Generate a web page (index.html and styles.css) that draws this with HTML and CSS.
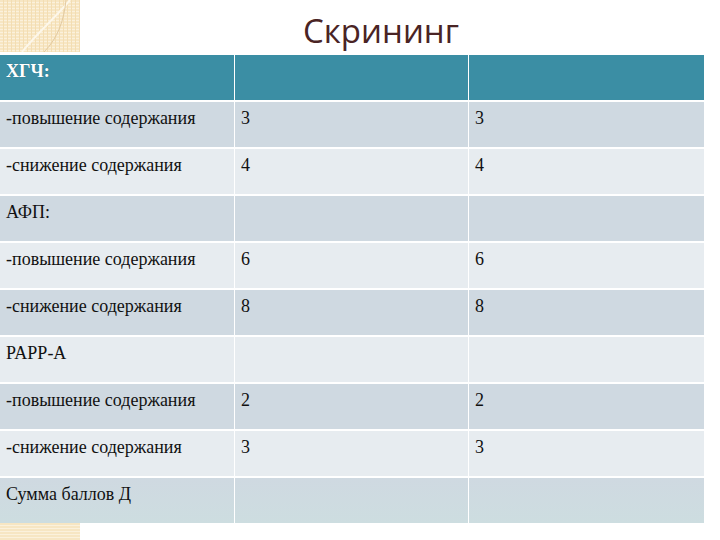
FILE: index.html
```html
<!DOCTYPE html>
<html lang="ru">
<head>
<meta charset="utf-8">
<title>Скрининг</title>
<link rel="stylesheet" href="styles.css">
</head>
<body>
<div class="slide">
  <div class="top">
    <svg class="deco" width="80" height="52" viewBox="0 0 80 52">
      <defs>
        <pattern id="stripes" width="4" height="3" patternUnits="userSpaceOnUse">
          <rect width="4" height="3" fill="#f7e6c3"/>
          <rect y="2" width="4" height="1" fill="#fbf1dc"/>
          <rect x="3" width="1" height="3" fill="#f3ddb2"/>
        </pattern>
      </defs>
      <rect width="80" height="52" fill="url(#stripes)"/>
      <path d="M22 52 C40 30 55 18 70 0" stroke="#fdf7ea" stroke-width="2" fill="none"/>
      <path d="M44 52 C58 38 64 20 66 0" stroke="#e2c9a0" stroke-width="1" fill="none"/>
    </svg>
    <h1 class="title">Скрининг</h1>
  </div>
  <div class="table">
    <div class="cell head bold">ХГЧ:</div><div class="cell head"></div><div class="cell head"></div>
    <div class="cell dark">-повышение содержания</div><div class="cell dark">3</div><div class="cell dark">3</div>
    <div class="cell light">-снижение содержания</div><div class="cell light">4</div><div class="cell light">4</div>
    <div class="cell dark">АФП:</div><div class="cell dark"></div><div class="cell dark"></div>
    <div class="cell light">-повышение содержания</div><div class="cell light">6</div><div class="cell light">6</div>
    <div class="cell dark">-снижение содержания</div><div class="cell dark">8</div><div class="cell dark">8</div>
    <div class="cell light">PAPP-A</div><div class="cell light"></div><div class="cell light"></div>
    <div class="cell dark">-повышение содержания</div><div class="cell dark">2</div><div class="cell dark">2</div>
    <div class="cell light">-снижение содержания</div><div class="cell light">3</div><div class="cell light">3</div>
    <div class="cell dark last">Сумма баллов Д</div><div class="cell dark last"></div><div class="cell dark last"></div>
  </div>
  <div class="bottom-deco"></div>
</div>
</body>
</html>
```
FILE: styles.css
```css
html, body {
  margin: 0;
  padding: 0;
  background: #ffffff;
}
.slide {
  width: 720px;
  height: 540px;
  overflow: hidden;
  display: flex;
  flex-direction: column;
}
.top {
  display: flex;
  height: 55px;
  align-items: flex-start;
}
.deco {
  display: block;
  flex: none;
}
.title {
  flex: 1;
  margin: 0;
  padding: 11px 38px 0 0;
  text-align: center;
  font-family: "Open Sans", "Noto Sans", sans-serif;
  font-weight: 400;
  font-size: 33px;
  line-height: 40px;
  color: #4a2424;
}
.table {
  display: grid;
  grid-template-columns: 234px 233px 235px;
  grid-auto-rows: 45px;
  column-gap: 1px;
  row-gap: 2px;
  width: 704px;
  background: #ffffff;
}
.cell {
  font-family: "Liberation Serif", "Times New Roman", serif;
  font-size: 18px;
  line-height: 22px;
  padding: 5px 6px 0 6px;
  color: #111111;
  box-sizing: border-box;
}
.head {
  background: #3b8ea4;
  color: #ffffff;
}
.bold {
  font-weight: bold;
  text-shadow: 0 0 1px rgba(0,0,0,0.3);
}
.dark {
  background: #cfd9e1;
}
.light {
  background: #e7ecf0;
}
.last {
  background: linear-gradient(#cfd9e1, #cddde0);
}
.bottom-deco {
  width: 80px;
  height: 17px;
  background: repeating-linear-gradient(#f7e6c3 0 2px, #fbf1dc 2px 3px);
}
```
